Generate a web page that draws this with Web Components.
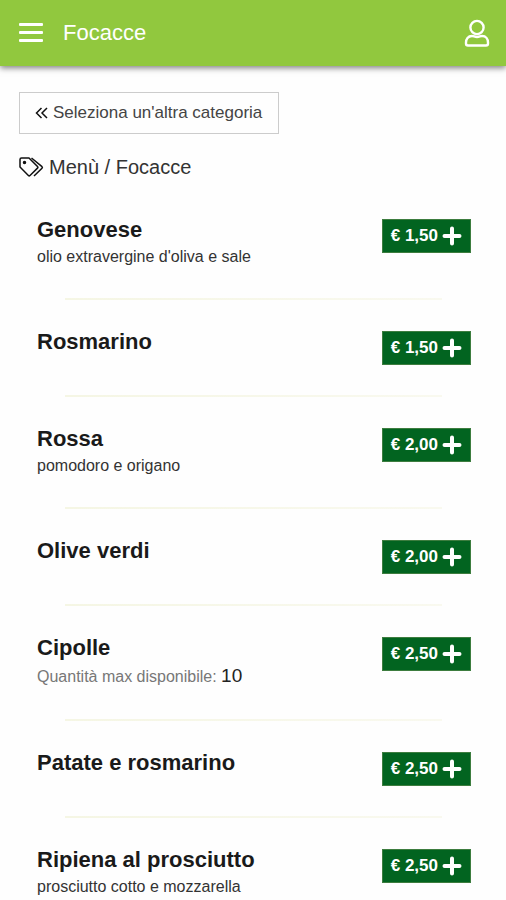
<!DOCTYPE html>
<html lang="it">

<head>
  <meta charset="UTF-8">
  <meta name="viewport" content="width=device-width, initial-scale=1.0">
  <title>Focacce</title>
  <style>
    body {
      margin: 0;
      background: #fefefe;
      color: #333;
      font-family: "Liberation Sans", Arial, sans-serif;
    }

    main {
      padding: 26px 19px 0;
    }
  </style>
</head>

<body>
  <app-header>Focacce</app-header>
  <main>
    <back-link href="#categorie">Seleziona un'altra categoria</back-link>
    <menu-path>Menù / Focacce</menu-path>
    <menu-list>
      <menu-item price="1,50">Genovese<span slot="info">olio extravergine d'oliva e sale</span></menu-item>
      <menu-item price="1,50">Rosmarino</menu-item>
      <menu-item price="2,00">Rossa<span slot="info">pomodoro e origano</span></menu-item>
      <menu-item price="2,00">Olive verdi</menu-item>
      <menu-item price="2,50" max="10">Cipolle</menu-item>
      <menu-item price="2,50">Patate e rosmarino</menu-item>
      <menu-item price="2,50">Ripiena al prosciutto<span slot="info">prosciutto cotto e mozzarella</span></menu-item>
    </menu-list>
  </main>

  <template id="app-header">
    <style>
      :host {
        display: flex;
        align-items: center;
        height: 66px;
        padding: 0 16px 0 18px;
        background: #91c83e;
        color: #fff;
        box-shadow: 0 2px 6px rgba(0, 0, 0, .5);
      }

      button {
        display: flex;
        padding: 0;
        border: 0;
        background: none;
        color: inherit;
      }

      h1 {
        flex: 1;
        margin: 0 0 0 19px;
        font-size: 22px;
        font-weight: normal;
        line-height: 28px;
      }
    </style>
    <button aria-label="Apri menu">
      <svg width="26" height="22" viewBox="0 0 26 22" fill="currentColor">
        <rect x="1" y="1" width="24" height="3" rx="1" />
        <rect x="1" y="9" width="24" height="3" rx="1" />
        <rect x="1" y="17" width="24" height="3" rx="1" />
      </svg>
    </button>
    <h1><slot></slot></h1>
    <button aria-label="Profilo">
      <svg width="26" height="28" viewBox="0 0 26 28" fill="none" stroke="currentColor" stroke-width="2.400">
        <circle cx="13" cy="8.500" r="6.600" />
        <path d="M8 17C4 17 2 20 2 23.500v1Q2 26.500 4 26.500h18q2 0 2-2v-1C24 20 22 17 18 17c-2 0-2.500 1-5 1s-3-1-5-1z" />
      </svg>
    </button>
  </template>

  <template id="back-link">
    <style>
      :host {
        display: flex;
      }

      a {
        display: flex;
        align-items: center;
        gap: 5px;
        padding: 0 16px 0 15px;
        border: 1px solid #ccc;
        color: #444;
        font-size: 17px;
        line-height: 40px;
        text-decoration: none;
      }
    </style>
    <a>
      <svg width="13" height="13" viewBox="0 0 13 13" fill="none" stroke="#111" stroke-width="1.500">
        <path d="M6.500 1l-5 5 5 5M12 1l-5 5 5 5" />
      </svg>
      <span><slot></slot></span>
    </a>
  </template>

  <template id="menu-path">
    <style>
      :host {
        display: flex;
        align-items: center;
        gap: 5px;
        margin-top: 20px;
        font-size: 20px;
        line-height: 26px;
      }
    </style>
    <svg width="25" height="20" viewBox="0 0 25 20" fill="none" stroke="#111" stroke-width="1.500" stroke-linejoin="round">
      <path d="M1 2.500Q1 1 2.500 1H10l8.500 8.500q.8.800 0 1.600L11 18.500q-.8.800-1.600 0L1 10z" />
      <path d="M12.500 1l10.500 8.700q.8.800 0 1.600L15 19" />
      <circle cx="5.500" cy="5.500" r="1" fill="#111" />
    </svg>
    <span><slot></slot></span>
  </template>

  <template id="menu-list">
    <style>
      :host {
        display: block;
        margin-top: 8px;
        padding: 0 16px 0 18px;
      }
    </style>
    <slot></slot>
  </template>

  <template id="menu-item">
    <style>
      :host {
        display: block;
      }

      .row {
        display: flex;
        align-items: flex-start;
        justify-content: space-between;
        padding: 31px 0 30px;
      }

      h2 {
        margin: 0;
        color: #1a1a1a;
        font-size: 22px;
        line-height: 22px;
      }

      p {
        margin: 5px 0 0;
        font-size: 16px;
        line-height: 22px;
      }

      .max {
        color: #777;
        line-height: 24px;
      }

      .max b {
        color: #222;
        font-size: 19px;
        font-weight: normal;
      }

      button {
        display: flex;
        align-items: center;
        gap: 4px;
        height: 34px;
        padding: 0 8px;
        border: 1px solid #3d7d3f;
        background: #026420;
        color: #fff;
        font: bold 17px "Liberation Sans", Arial, sans-serif;
      }

      hr {
        height: 2px;
        margin: 0 29px 0 28px;
        border: 0;
        background: linear-gradient(90deg, #f5f6e4, #f9f9ef);
      }

      :host(:last-child) .row {
        padding-bottom: 0;
      }

      :host(:last-child) hr {
        display: none;
      }
    </style>
    <div class="row">
      <div>
        <h2><slot></slot></h2>
        <p class="info"><slot name="info"></slot></p>
        <p class="max">Quantità max disponibile: <b></b></p>
      </div>
      <button>
        <span class="price"></span>
        <svg width="20" height="20" viewBox="0 0 20 20" fill="none" stroke="currentColor" stroke-width="4" stroke-linecap="round">
          <path d="M10 2.500v15M2.500 10h15" />
        </svg>
      </button>
    </div>
    <hr>
  </template>
</body>
<script>
  class BaseElement extends HTMLElement {
    constructor() {
      super();
      const template = document.getElementById(this.localName);
      this.attachShadow({ mode: 'open' }).appendChild(template.content.cloneNode(true));
    }
  }

  class AppHeader extends BaseElement { }
  class MenuPath extends BaseElement { }
  class MenuList extends BaseElement { }

  class BackLink extends BaseElement {
    connectedCallback() {
      this.shadowRoot.querySelector('a').href = this.getAttribute('href');
    }
  }

  class MenuItem extends BaseElement {
    connectedCallback() {
      const root = this.shadowRoot;
      const max = this.getAttribute('max');
      root.querySelector('.price').textContent = '€ ' + this.getAttribute('price');
      if (!this.querySelector('[slot=info]')) root.querySelector('.info').remove();
      if (max) root.querySelector('.max b').textContent = max;
      else root.querySelector('.max').remove();
      root.querySelector('button').addEventListener('click', () => {
        this.dispatchEvent(new CustomEvent('add', { bubbles: true }));
      });
    }
  }

  customElements.define('app-header', AppHeader);
  customElements.define('back-link', BackLink);
  customElements.define('menu-path', MenuPath);
  customElements.define('menu-list', MenuList);
  customElements.define('menu-item', MenuItem);
</script>

</html>
